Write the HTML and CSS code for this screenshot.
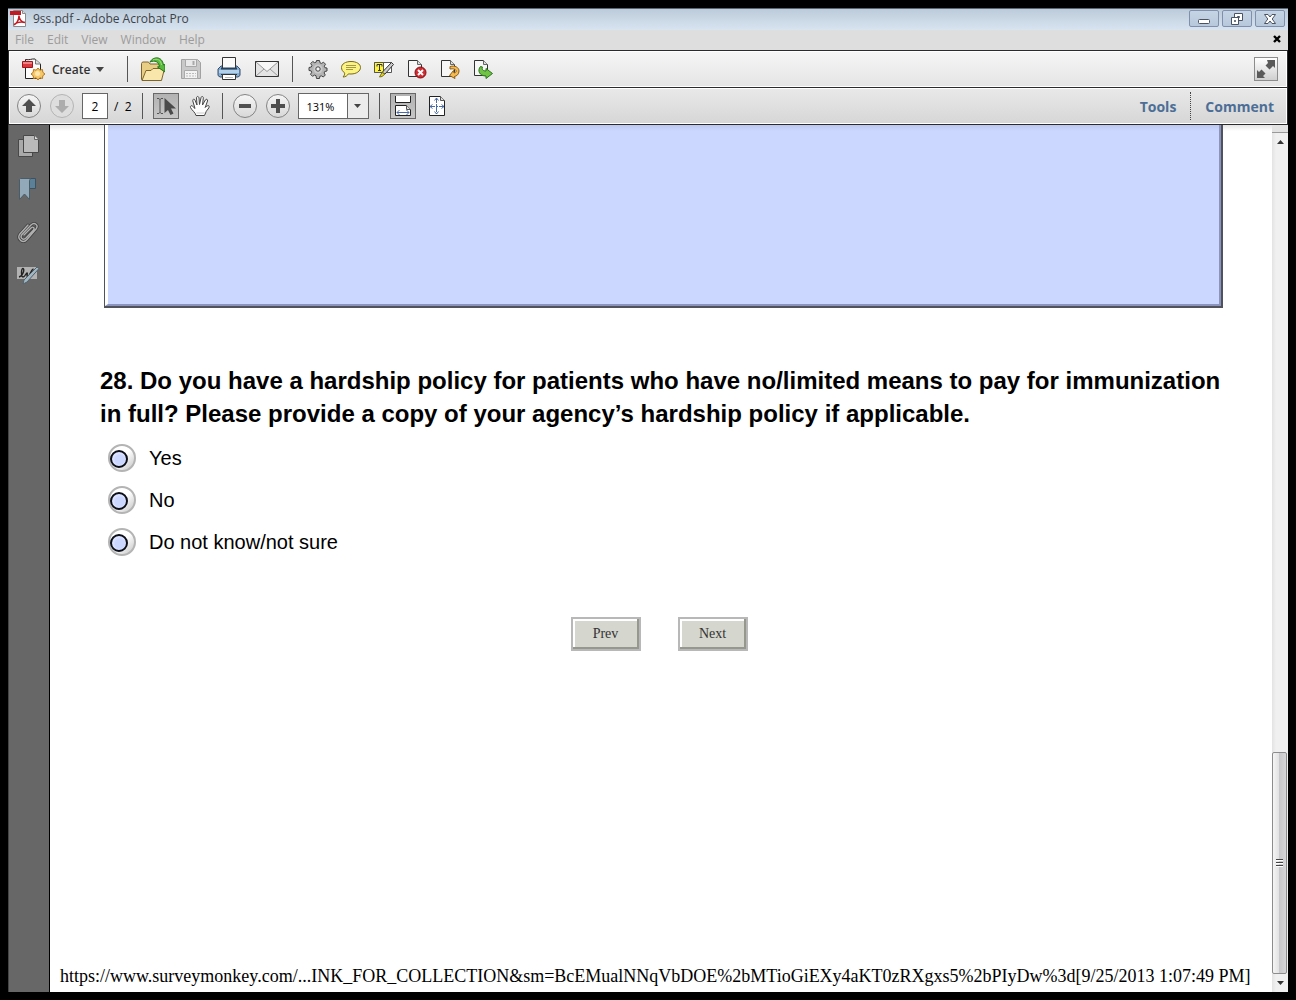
FILE: index.html
```html
<!DOCTYPE html>
<html lang="en">
<head>
  <meta charset="UTF-8">
  <meta name="viewport" content="width=device-width, initial-scale=1.0">
  <title>9ss.pdf - Adobe Acrobat Pro</title>
  <link rel="stylesheet" href="styles.css">
</head>
<body>
  <div class="window">
    <header class="titlebar">
      <svg class="app-icon" width="18" height="18" viewBox="0 0 18 18">
        <path d="M3.500.5h9l3 3v13h-12z" fill="#fff" stroke="#8a8a8a"/>
        <path d="M12.500.5v3h3" fill="#ddd" stroke="#8a8a8a"/>
        <path d="M0 1h11v4H0z" fill="#c11a22"/>
        <path d="M4 15c3-2 5-6 5-9.500M9 6c.5 4 3 6 6 6.500M4 14.500c2-2 7-3 11-2" fill="none" stroke="#c11a22" stroke-width="1.500"/>
      </svg>
      <span class="title">9ss.pdf - Adobe Acrobat Pro</span>
      <div class="window-buttons">
        <button type="button" aria-label="Minimize">
          <svg width="12" height="12" viewBox="0 0 12 12"><rect x=".5" y="6.500" width="11" height="4" rx="1" fill="#fff" stroke="#4b5363"/></svg>
        </button>
        <button type="button" aria-label="Restore">
          <svg width="14" height="12" viewBox="0 0 14 12">
            <path d="M4.500.5h8v7h-8z" fill="#fff" stroke="#4b5363"/><path d="M7.500 3.500h2v1h-2z" fill="#b9c9dc" stroke="#4b5363"/>
            <path d="M1.500 4.500h7v7h-7z" fill="#fff" stroke="#4b5363"/><path d="M4.500 7.500h1v1h-1z" fill="#b9c9dc" stroke="#4b5363"/>
          </svg>
        </button>
        <button type="button" aria-label="Close">
          <svg width="12" height="10" viewBox="0 0 12 10"><path d="M.5.5h3.500L6 3 8 .5h3.500L8.200 5l3.300 4.500H8L6 7 4 9.500H.5L3.800 5z" fill="#fff" stroke="#4b5363"/></svg>
        </button>
      </div>
    </header>

    <nav class="menubar">
      <button type="button">File</button>
      <button type="button">Edit</button>
      <button type="button">View</button>
      <button type="button">Window</button>
      <button type="button">Help</button>
      <button type="button" class="close-doc" aria-label="Close document">
        <svg width="8" height="8" viewBox="0 0 8 8"><path d="M1 1l6 6M7 1L1 7" stroke="#000" stroke-width="2.400"/></svg>
      </button>
    </nav>

    <div class="toolbar">
      <button type="button" class="create">
        <svg width="24" height="26" viewBox="0 0 24 26">
          <path d="M4.500 3.500c4 1 6-1 9.500-.5l5.500 5v14.500h-15z" fill="#fdfdfd" stroke="#222"/>
          <path d="M14.500 3.500v4.500h5" fill="#ddd" stroke="#777"/>
          <path d="M1.500 5.500h10v6h-10z" fill="#d9383d" stroke="#a3141b"/>
          <path d="M2 6h9v2H2z" fill="#ef8184"/>
          <path d="M17 11l1.800 2.200 2.700-.7.300 2.800 2.200 1.700-2.200 1.700-.3 2.800-2.700-.7L17 23l-1.800-2.200-2.700.7-.3-2.800L10 17l2.200-1.700.3-2.800 2.700.7z" transform="translate(0 1)" fill="#f5c768" stroke="#b77a1c"/>
          <circle cx="16.500" cy="17.500" r="2.500" fill="#fde6ab"/>
        </svg>
        <span>Create</span>
        <svg width="8" height="5" viewBox="0 0 8 5"><path d="M0 0h8L4 5z" fill="#444"/></svg>
      </button>
      <span class="separator"></span>
      <div class="group wide">
        <button type="button" class="tool" aria-label="Open">
          <svg width="24" height="26" viewBox="0 0 24 26">
            <path d="M.5 23.500v-16l1-1.500h6l1.500 2h11.500v15.500z" fill="#e8cd84" stroke="#80652b"/>
            <path d="M1 24.500l4-10h5l2-2h11.500l-3 12z" fill="#f8e6ab" stroke="#80652b"/>
            <path d="M9 6c3-5.500 12-6.500 13.500 3l1.500-.5v7.500l-7.500-5 2-.5C17.500 5.500 14 4 9 6z" fill="#58ba3c" stroke="#23731b"/>
            <path d="M12 4c4-2 8 0 8.500 5" fill="none" stroke="#a7df82"/>
          </svg>
        </button>
        <button type="button" class="tool" aria-label="Save">
          <svg width="22" height="22" viewBox="0 0 22 22">
            <path d="M1.500 1.500h16l3 3v16h-19z" fill="#c9c9c9" stroke="#a2a2a2"/>
            <path d="M5.500 1.500h11v7h-11z" fill="#e9e9e9" stroke="#a8a8a8"/><path d="M12.500 3h2v4h-2z" fill="#aaa"/>
            <path d="M4.500 12.500h13v8h-13z" fill="#f2f2f2" stroke="#aaa"/><path d="M6 15.500h10M6 18h10" stroke="#bbb" stroke-dasharray="2 1"/>
          </svg>
        </button>
        <button type="button" class="tool" aria-label="Print">
          <svg width="24" height="26" viewBox="0 0 24 26">
            <path d="M4 10h16l3 3v6.500l-2 1.500H3l-2-1.500V13z" fill="#85acd3" stroke="#354f6d"/>
            <path d="M2 14h20v3H2z" fill="#b5d0e9"/>
            <path d="M5.500 1.500h13v11h-13z" fill="#fafafa" stroke="#333"/>
            <path d="M4 12.500h16" stroke="#29435f" stroke-width="2"/>
            <path d="M4 18.500h16" stroke="#333"/>
            <path d="M5.500 18.500h13v5h-13z" fill="#fff" stroke="#333"/><path d="M8 21.500h8" stroke="#bbb"/>
          </svg>
        </button>
        <button type="button" class="tool" aria-label="Email">
          <svg width="24" height="18" viewBox="0 0 24 18">
            <path d="M.5 1.500h23v15H.5z" fill="#e4e4e4" stroke="#333"/>
            <path d="M1 16l8-7M23 16l-8-7" stroke="#999"/>
            <path d="M1 2l11 9.500L23 2" fill="#f7f7f7" stroke="#999"/>
            <path d="M.5 1.500h23" stroke="#333"/>
          </svg>
        </button>
      </div>
      <span class="separator"></span>
      <div class="group">
        <button type="button" class="tool" aria-label="Settings">
          <svg width="20" height="20" viewBox="0 0 20 20">
            <path d="M8.500 1.500h3l.5 2.300 1.500.6 2-1.200 2 2-1.200 2 .6 1.500 2.100.3v3l-2.300.5-.6 1.500 1.200 2-2 2-2-1.200-1.500.6-.3 2.100h-3L8 16.700l-1.500-.6-2 1.200-2-2 1.200-2-.6-1.500L1 11.500v-3L3.300 8l.6-1.500-1.200-2 2-2 2 1.200 1.500-.6z" fill="#b4b4b4" stroke="#444"/>
            <circle cx="10" cy="10" r="4.500" fill="#ccc"/><circle cx="10" cy="10" r="2.200" fill="#f4f4f4" stroke="#444"/>
          </svg>
        </button>
        <button type="button" class="tool" aria-label="Add sticky note">
          <svg width="22" height="18" viewBox="0 0 22 18">
            <path d="M11 1.500c5.500 0 9.500 2.500 9.500 6s-4 6.500-9.500 6.500c-1 0-1.500 0-2.500-.2C7.500 15.500 5.500 17 3 17c1.300-1.300 2-3 1.500-4.300C2.500 11.500 1.500 9.500 1.500 7.500c0-3.500 4-6 9.500-6z" fill="#fbf485" stroke="#7a6911"/>
            <path d="M6 5.500h10M6 7.500h10M6 9.500h7" stroke="#a59a4a"/>
          </svg>
        </button>
        <button type="button" class="tool" aria-label="Highlight text">
          <svg width="22" height="18" viewBox="0 0 22 18">
            <path d="M1.500 2.500h17v10h-17z" fill="#fff" stroke="#555"/><path d="M1.500 2.500h9v10h-9z" fill="#fff433" stroke="#555"/>
            <path d="M4 4.500h5M6.500 5v5.500M5 10.500h3M4 4.500v2M9 4.500v2" stroke="#333"/>
            <path d="M18.500 2.500l2 2-8.500 9.500-3-1.500z" fill="#ccc" stroke="#333"/><path d="M9 12.500l3 1.500-3 2.500-2.500.5z" fill="#e8d515" stroke="#777015"/>
          </svg>
        </button>
        <button type="button" class="tool" aria-label="Delete pages">
          <svg width="22" height="22" viewBox="0 0 22 22">
            <path d="M2.500 18.500v-16h9l4 4v12z" fill="#f7f7f7" stroke="#333"/><path d="M11.500 2.500v4h4" fill="#ddd" stroke="#666"/>
            <circle cx="14.500" cy="14.500" r="5.500" fill="#d12a30" stroke="#7b1115"/><path d="M12 12l5 5M17 12l-5 5" stroke="#fff" stroke-width="2"/>
          </svg>
        </button>
        <button type="button" class="tool" aria-label="Rotate pages">
          <svg width="22" height="22" viewBox="0 0 22 22">
            <path d="M2.500 18.500v-16h9l4 4v12z" fill="#f7f7f7" stroke="#333"/><path d="M11.500 2.500v4h4" fill="#ddd" stroke="#666"/>
            <path d="M11 8.500c5-1.500 9 1 9 4.500s-2.500 5-4.500 5.500l.5 2-5.500-3 4-5 .5 2.500c1.500-.5 2.500-1 2-2.500s-3-2-6-1.500z" fill="#f5b951" stroke="#8b5c13"/>
          </svg>
        </button>
        <button type="button" class="tool" aria-label="Export">
          <svg width="22" height="22" viewBox="0 0 22 22">
            <path d="M2.500 17.500v-15h9l4 4v11z" fill="#f7f7f7" stroke="#333"/><path d="M11.500 2.500v4h4" fill="#ddd" stroke="#666"/>
            <path d="M8.500 8.500c-3.500 4-1 9.500 5.500 9.500v2.500l6.500-5-6.500-5V13c-3 0-4.500-1.500-3.500-4z" fill="#71c343" stroke="#27731d"/>
          </svg>
        </button>
      </div>
      <button type="button" class="fullscreen" aria-label="Read mode">
        <svg width="20" height="20" viewBox="0 0 20 20">
          <path d="M11 1h8v8l-2-2-3.500 3.500-4-4L12 4zM9 19H1v-8l2 2 2.500-2.500 4 4L7 17z" fill="#5a5a5a"/>
        </svg>
      </button>
    </div>

    <div class="toolbar navigation">
      <div class="group">
        <button type="button" class="round" aria-label="Previous page">
          <svg width="14" height="14" viewBox="0 0 14 14"><path d="M7 0l7 7h-4v6H4V7H0z" fill="#4f4f4f"/></svg>
        </button>
        <button type="button" class="round" aria-label="Next page" disabled>
          <svg width="14" height="14" viewBox="0 0 14 14"><path d="M7 14L0 7h4V1h6v6h4z" fill="#adadad"/></svg>
        </button>
      </div>
      <input class="page-number" type="text" value="2" aria-label="Page number">
      <span class="page-count">/&nbsp; 2</span>
      <span class="separator"></span>
      <div class="group">
        <button type="button" class="tool active" aria-label="Select tool">
          <svg width="22" height="20" viewBox="0 0 22 20">
            <path d="M2 2.500h2l1 1 1-1h2M2 17.500h2l1-1 1 1h2M5 3v14" fill="none" stroke="#555"/>
            <path d="M9.500 2v15l3.500-3 2.500 5 3-1.500-2.500-5h5z" fill="#4a4a4a"/>
          </svg>
        </button>
        <button type="button" class="tool" aria-label="Hand tool">
          <svg width="22" height="22" viewBox="0 0 22 22">
            <path d="M7 20.500c-.5-3-4.500-5.500-5.500-8-.5-1.500 1-2.500 2.200-1.200L6 13.500 3.800 6C3.500 4 5.500 3.500 6 5.200L8 10 7.500 3c0-2 2.200-2 2.500 0l.5 6.500L12 2.800c.3-2 2.500-1.600 2.300.3L13.500 10l2.800-5c1-1.500 2.800-.6 2.200 1l-2.300 6.500c1.500-2 4-2.500 4-1 0 2-2 3-3 5L15.500 20.500z" fill="#fdfdfd" stroke="#444" stroke-linejoin="round"/>
            <path d="M7.500 18h8" stroke="#ccc"/>
          </svg>
        </button>
      </div>
      <span class="separator"></span>
      <div class="group">
        <button type="button" class="round" aria-label="Zoom out">
          <svg width="14" height="14" viewBox="0 0 14 14"><path d="M1 5h12v4H1z" fill="#4f4f4f"/></svg>
        </button>
        <button type="button" class="round" aria-label="Zoom in">
          <svg width="14" height="14" viewBox="0 0 14 14"><path d="M5 0h4v5h5v4H9v5H5V9H0V5h5z" fill="#4f4f4f"/></svg>
        </button>
      </div>
      <div class="zoom">
        <select aria-label="Zoom level">
          <option>131%</option>
        </select>
        <svg class="zoom-arrow" width="7" height="4" viewBox="0 0 7 4"><path d="M0 0h7L3.500 4z" fill="#444"/></svg>
      </div>
      <span class="separator"></span>
      <div class="group">
        <button type="button" class="tool active" aria-label="Fit width">
          <svg width="18" height="22" viewBox="0 0 18 22">
            <path d="M1.500 1v6.500h15V1" fill="#fff" stroke="#222"/>
            <path d="M1.500 20.500v-10h11l4 4v6z" fill="#fff" stroke="#222"/>
            <path d="M12.500 10.500v4h4" fill="#ddd" stroke="#555"/>
            <path d="M3 17.500h12M5.500 15L3 17.500 5.500 20M12.500 15l2.500 2.500-2.500 2.500" fill="none" stroke="#4b6ba6"/>
          </svg>
        </button>
        <button type="button" class="tool" aria-label="Fit page">
          <svg width="18" height="22" viewBox="0 0 18 22">
            <path d="M1.500 1.500h11l4 4v15h-15z" fill="#fff" stroke="#222"/><path d="M12.500 1.500v4h4" fill="#ddd" stroke="#555"/>
            <path d="M8.500 3v16M2 11.500h14" stroke="#4b6ba6" stroke-dasharray="5 1 2 1"/>
            <path d="M6.500 5.500L8.500 3l2 2.500M6.500 16.500l2 2.500 2-2.500M4.500 9.500L2 11.500l2.500 2M13.500 9.500l2.500 2-2.500 2" fill="none" stroke="#4b6ba6"/>
          </svg>
        </button>
      </div>
      <div class="panes">
        <button type="button">Tools</button>
        <button type="button">Comment</button>
      </div>
    </div>

    <div class="workspace">
      <aside class="sidebar">
        <button type="button" aria-label="Page thumbnails">
          <svg width="22" height="24" viewBox="0 0 22 24">
            <path d="M1.500 5.500h14v17h-14z" fill="#a9a9a9" stroke="#484848"/>
            <path d="M6.500 1.500h11l4 4v13h-15z" fill="#bababa" stroke="#484848"/><path d="M17.500 1.500v4h4" fill="#ddd" stroke="#666"/>
          </svg>
        </button>
        <button type="button" aria-label="Bookmarks">
          <svg width="22" height="24" viewBox="0 0 22 24">
            <path d="M12.500 1.500h6v10h-6z" fill="#5d8099" stroke="#3d525f"/>
            <path d="M2.500 2.500l1-1h10l-1 2v19L7.500 17l-5 5.500z" fill="#91a9b8" stroke="#4a5c67"/>
          </svg>
        </button>
        <button type="button" aria-label="Attachments">
          <svg width="22" height="24" viewBox="0 0 22 24">
            <g fill="none" stroke-linecap="round">
              <path d="M7 15l7-7c2-2 4 0 2.500 2L9 18c-3 3-6.500-.5-4-3.500L14 5c3.500-3.500 8 0 5 4L10 19.500c-4 4.500-10 0-7.500-5L11 5" stroke="#3e3e3e" stroke-width="3"/>
              <path d="M7 15l7-7c2-2 4 0 2.500 2L9 18c-3 3-6.500-.5-4-3.500L14 5c3.500-3.500 8 0 5 4L10 19.500c-4 4.500-10 0-7.500-5L11 5" stroke="#b0b0b0" stroke-width="1.400"/>
            </g>
          </svg>
        </button>
        <button type="button" aria-label="Signatures">
          <svg width="24" height="20" viewBox="0 0 24 20">
            <path d="M1 2h20v12H1z" fill="#b2b2b2"/>
            <path d="M3 12c4-1 6-8 4-8.500S5 12 7 12s3-4 4-4-1 4 1 3.500 3-7 5.500-7.500" fill="none" stroke="#222" stroke-width="1.400"/>
            <path d="M21 2l2 1.500L11 17l-4 2 1-4z" fill="#a2b7c4" stroke="#50616c"/>
          </svg>
        </button>
      </aside>

      <main class="page">
        <div class="field">
          <textarea aria-label="Question 27 comments"></textarea>
        </div>
        <form class="survey">
          <fieldset>
            <legend>28. Do you have a hardship policy for patients who have no/limited means to pay for immunization<br>in full? Please provide a copy of your agency’s hardship policy if applicable.</legend>
            <label class="option"><input type="radio" name="hardship" value="yes">Yes</label>
            <label class="option"><input type="radio" name="hardship" value="no">No</label>
            <label class="option"><input type="radio" name="hardship" value="unsure">Do not know/not sure</label>
          </fieldset>
          <div class="form-buttons">
            <button type="button">Prev</button>
            <button type="button">Next</button>
          </div>
        </form>
        <footer>https://www.surveymonkey.com/...INK_FOR_COLLECTION&amp;sm=BcEMualNNqVbDOE%2bMTioGiEXy4aKT0zRXgxs5%2bPIyDw%3d[9/25/2013 1:07:49 PM]</footer>
      </main>

      <div class="scrollbar">
        <div class="split"></div>
        <button type="button" aria-label="Scroll up">
          <svg width="7" height="4" viewBox="0 0 7 4"><path d="M3.500 0L7 4H0z" fill="#333"/></svg>
        </button>
        <div class="track">
          <div class="thumb">
            <svg width="7" height="9" viewBox="0 0 7 9"><path d="M0 1.500h7M0 4.500h7M0 7.500h7" stroke="#444"/><path d="M0 2.500h7M0 5.500h7M0 8.500h7" stroke="#fff"/></svg>
          </div>
        </div>
        <button type="button" aria-label="Scroll down">
          <svg width="7" height="4" viewBox="0 0 7 4"><path d="M0 0h7L3.500 4z" fill="#333"/></svg>
        </button>
      </div>
    </div>
  </div>
</body>
</html>
```
FILE: styles.css
```css
:root {
  --ui-font: "Open Sans", "Noto Sans", sans-serif;
  --line: #2b2b2e;
}
*,
*::before {
  box-sizing: border-box;
}
body {
  margin: 0;
  padding: 8px;
  background: #000;
  color: #000;
  font-family: var(--ui-font);
  font-size: 12px;
}
button {
  display: flex;
  align-items: center;
  justify-content: center;
  margin: 0;
  padding: 0;
  border: none;
  background: none;
  color: inherit;
  font: inherit;
}
svg {
  display: block;
  flex: none;
}
.window {
  display: flex;
  flex-direction: column;
  min-height: calc(100vh - 16px);
}

/* title and menu */
.titlebar {
  display: flex;
  align-items: center;
  height: 22px;
  padding: 0 3px 2px 2px;
  border-top: 1px solid #5c666f;
  background: linear-gradient(#bccbda, #d8e4f0);
}
.title {
  flex: 1;
  margin-left: 5px;
  color: #3c4249;
  font-size: 12px;
}
.window-buttons {
  display: flex;
  gap: 3px;
}
.window-buttons button {
  width: 30px;
  height: 17px;
  border: 1px solid #8090ac;
  border-radius: 2px;
  background: linear-gradient(#c6d5e5, #b8c8dc);
}
.menubar {
  display: flex;
  align-items: center;
  gap: 13px;
  height: 20px;
  padding: 0 7px 2px;
  background: #dedede;
  color: #9c9c9c;
}
.menubar .close-doc {
  margin-left: auto;
}

/* toolbars */
.toolbar {
  display: flex;
  align-items: center;
  height: 37px;
  padding: 0 9px 0 12px;
  border: 1px solid var(--line);
  border-width: 1px 1px 0;
  background: linear-gradient(#f6f6f6, #e4e4e4);
  box-shadow: inset 0 0 0 1px #fff;
}
.navigation {
  height: 38px;
  padding: 0 13px 0 8px;
  border-bottom-width: 1px;
  background: linear-gradient(#e9e9e9, #d6d6d6);
}
.separator {
  width: 1px;
  height: 26px;
  margin: 0 13px;
  background: #555;
}
.navigation .separator {
  margin: 0 10px;
}
.group {
  display: flex;
  align-items: center;
  gap: 9px;
}
.group.wide {
  gap: 14px;
}
.create {
  margin-right: 10px;
  color: #333;
  font-weight: 600;
}
.create span {
  margin: 0 6px 0 7px;
}
.tool {
  width: 24px;
  height: 26px;
}
.tool.active {
  width: 26px;
  border: 1px solid #686868;
  background: linear-gradient(#b2b2b2, #c6c6c6);
}
.fullscreen {
  width: 24px;
  height: 24px;
  margin-left: auto;
  border: 1px solid #8c8c8c;
  background: linear-gradient(#fff, #cfcfcf);
}
.round {
  width: 24px;
  height: 24px;
  border: 1px solid #848484;
  border-radius: 50%;
  background: linear-gradient(#f6f6f6, #d8d8d8);
}
.round:disabled {
  border-color: #b4b4b4;
  background: #dedede;
}
.page-number {
  width: 26px;
  height: 26px;
  margin: 0 6px 0 8px;
  padding: 0;
  border: 1px solid #666;
  background: #fff;
  font: 12px var(--ui-font);
  text-align: center;
}
.zoom {
  position: relative;
  margin-left: 8px;
}
.zoom select {
  display: block;
  width: 71px;
  height: 26px;
  padding: 0 8px;
  appearance: none;
  border: 1px solid #666;
  border-radius: 0;
  background: linear-gradient(90deg, #fff 48px, #666 48px, #666 49px, #ececec 49px);
  color: #000;
  font: 11px var(--ui-font);
}
.zoom-arrow {
  position: absolute;
  top: 11px;
  right: 8px;
  pointer-events: none;
}
.panes {
  display: flex;
  margin-left: auto;
  color: #4c6e96;
  font-size: 14px;
  font-weight: 700;
}
.panes button {
  height: 28px;
}
.panes button + button {
  margin-left: 14px;
  padding-left: 14px;
  border-left: 1px dotted #444;
}

/* document area */
.workspace {
  display: flex;
  flex: 1;
}
.sidebar {
  display: flex;
  flex-direction: column;
  align-items: center;
  gap: 19px;
  width: 42px;
  padding: 9px 3px 0 0;
  border-left: 1px solid #444;
  border-right: 1px solid #000;
  background: #676767;
}
.sidebar button {
  width: 24px;
  height: 24px;
}
.page {
  display: flex;
  flex: 1;
  flex-direction: column;
  min-width: 0;
  background: linear-gradient(#e4e4e4, #fff 6px);
}
.field {
  height: 183px;
  margin: 0 49px 0 54px;
  border: solid #50525c;
  border-width: 0 2px 2px 1px;
}
.field textarea {
  display: block;
  width: 100%;
  height: 100%;
  resize: none;
  border: solid;
  border-width: 0 2px 2px 3px;
  border-color: #8a94bd #8a94bd #8a94bd #fff;
  outline: none;
  background: linear-gradient(#bcc7ee, #cbd7ff 6px);
}
.survey {
  padding: 56px 50px 0;
  font-family: "Liberation Sans", Arial, sans-serif;
}
fieldset {
  min-width: 0;
  margin: 0;
  padding: 0;
  border: none;
}
legend {
  margin-bottom: 7px;
  padding: 0;
  font-size: 24px;
  font-weight: bold;
  line-height: 33px;
  white-space: nowrap;
}
.option {
  display: flex;
  align-items: center;
  gap: 13px;
  height: 42px;
  padding-left: 8px;
  font-size: 20px;
}
.option input {
  position: relative;
  width: 28px;
  height: 28px;
  margin: 0;
  appearance: none;
  border: 2px solid #b4b4b4;
  border-radius: 50%;
  background: linear-gradient(135deg, #fff 50%, #c4c4c4);
}
.option input::before {
  content: "";
  position: absolute;
  top: 4px;
  left: 0;
  width: 18px;
  height: 18px;
  border: 2px solid #0c0e18;
  border-radius: 50%;
  background: radial-gradient(circle at 55% 55%, #cbd7ff 40%, #dfe6ff 65%, #8c99c8);
}
.option input:checked::before {
  background: #0c0e18;
}
.form-buttons {
  display: flex;
  justify-content: center;
  gap: 37px;
  margin: 54px 4px 0 0;
}
.form-buttons button {
  width: 70px;
  height: 34px;
  border: 2px solid #b8b8b8;
  background: #d5d6cd;
  box-shadow: inset -2px -2px #96978d, inset 2px 2px #fff;
  color: #333;
  font: 14px "Liberation Serif", "Times New Roman", serif;
}
footer {
  margin-top: auto;
  padding: 0 10px 5px;
  font: 18px/22px "Liberation Serif", "Times New Roman", serif;
  white-space: nowrap;
}

/* scrollbar */
.scrollbar {
  display: flex;
  flex-direction: column;
  width: 16px;
  background: linear-gradient(90deg, #e3e3e3, #f0f0f0 4px);
}
.scrollbar button {
  height: 18px;
}
.split {
  height: 8px;
  border-bottom: 1px solid #999;
  background: #e2e2e2;
}
.track {
  display: flex;
  flex: 1;
  flex-direction: column;
  justify-content: flex-end;
}
.thumb {
  display: flex;
  align-items: center;
  justify-content: center;
  width: 15px;
  height: 27%;
  border: 1px solid #8c8c8c;
  border-radius: 2px;
  background: linear-gradient(90deg, #f5f5f5, #e2e2e2 45%, #c8c8cb 50%, #d6d6d8);
}
```
